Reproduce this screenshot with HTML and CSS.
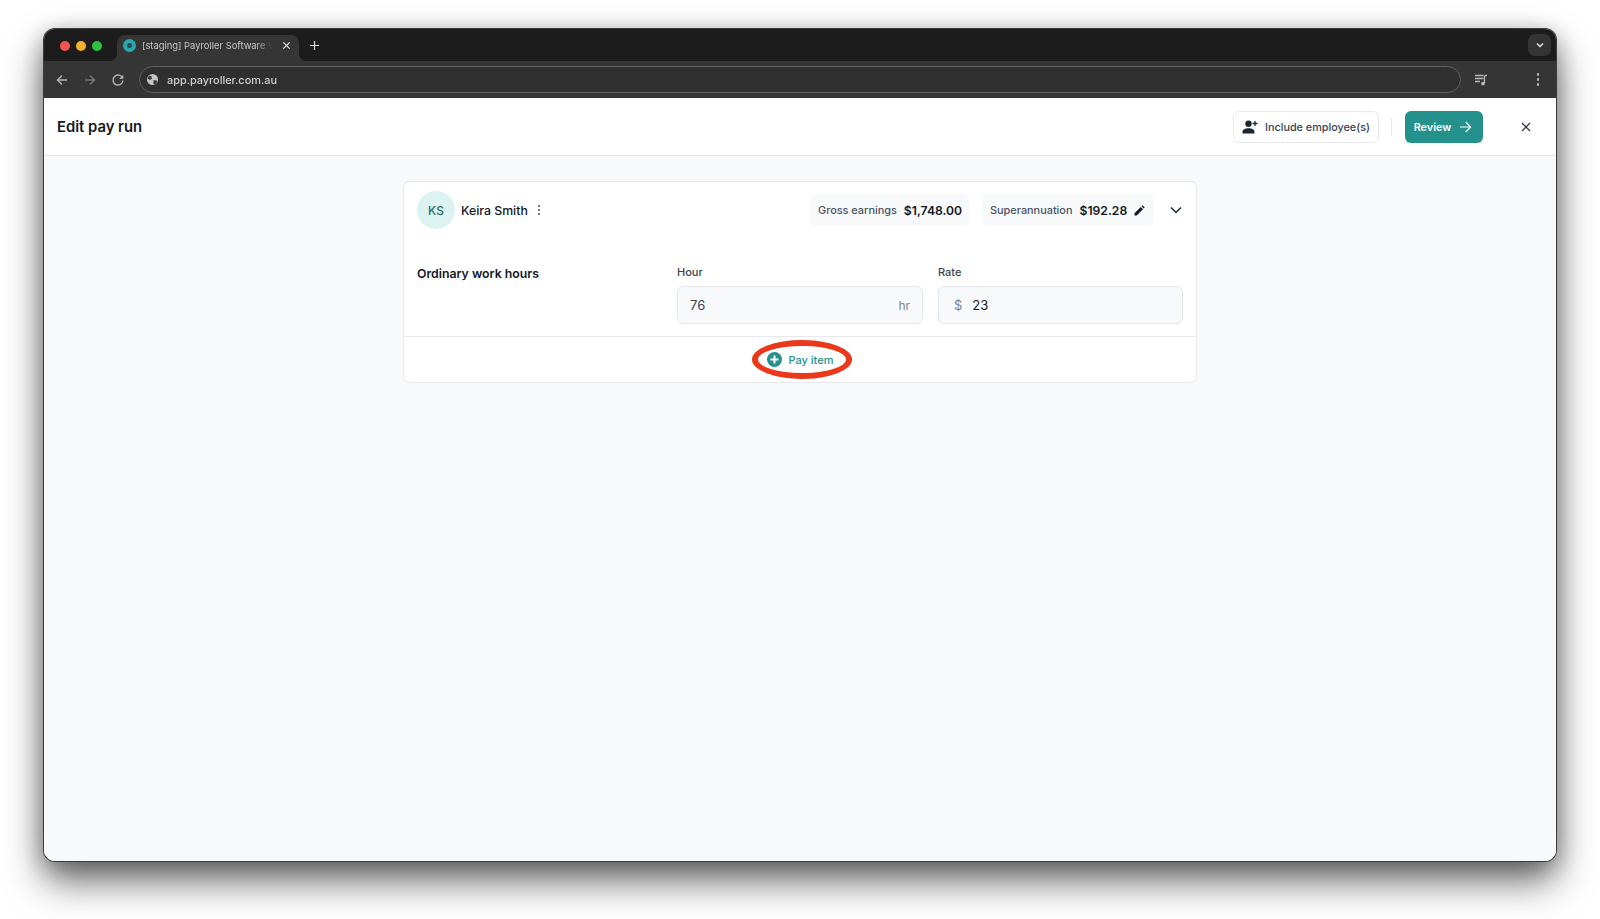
FILE: index.html
```html
<!DOCTYPE html>
<html lang="en">
<head>
  <meta charset="UTF-8">
  <title>Edit pay run</title>
  <link rel="stylesheet" href="styles.css">
</head>
<body>
  <div class="window">
    <!-- Browser chrome -->
    <div class="tabstrip">
      <div class="lights">
        <span class="light red"></span>
        <span class="light yellow"></span>
        <span class="light green"></span>
      </div>
      <div class="tab">
        <span class="favicon"></span>
        <span class="tab-title">[staging] Payroller Software V</span>
        <svg class="tab-close" width="9" height="9" viewBox="0 0 10 10"><path d="M1.5 1.5l7 7M8.5 1.5l-7 7" stroke="#e4e4e4" stroke-width="1.3" fill="none"/></svg>
      </div>
      <svg class="new-tab" width="11" height="11" viewBox="0 0 12 12"><path d="M6 1v10M1 6h10" stroke="#d8d8d8" stroke-width="1.3" fill="none"/></svg>
      <div class="tab-search">
        <svg width="10" height="10" viewBox="0 0 10 10"><path d="M2 3.5l3 3 3-3" stroke="#e8e8e8" stroke-width="1.4" fill="none"/></svg>
      </div>
    </div>
    <div class="toolbar">
      <svg class="nav-icon" width="14" height="14" viewBox="0 0 14 14"><path d="M12 7H2.5M7 2.5L2.5 7 7 11.5" stroke="#b4b4b4" stroke-width="1.4" fill="none"/></svg>
      <svg class="nav-icon" width="14" height="14" viewBox="0 0 14 14"><path d="M2 7h9.5M7 2.5L11.5 7 7 11.5" stroke="#777" stroke-width="1.4" fill="none"/></svg>
      <svg class="nav-icon" width="14" height="14" viewBox="0 0 14 14"><path d="M11.6 5A5 5 0 1 0 12 7.5" stroke="#b4b4b4" stroke-width="1.4" fill="none"/><path d="M12.3 1.8v4h-4z" fill="#b4b4b4"/></svg>
      <div class="address">
        <svg width="13" height="13" viewBox="0 0 13 13"><circle cx="6.5" cy="6.5" r="5.5" fill="#c4c4c4"/><path d="M3 2.5l2.5 1 .5 2-2 1.5-2.5-1.5zM7.5 7l3 .5.8 1.5-2.3 2.7-1.5-.7z" fill="#3a3a3a"/></svg>
        <span>app.payroller.com.au</span>
      </div>
      <svg class="media-icon" width="14" height="12" viewBox="0 0 14 12"><path d="M1 1.5h8.5M1 4.5h8.5M1 7.5h5" stroke="#b8b8b8" stroke-width="1.4" fill="none"/><path d="M10.5 2v7" stroke="#b8b8b8" stroke-width="1.3"/><path d="M10.5 1.5h2.5" stroke="#b8b8b8" stroke-width="1.4"/><circle cx="9" cy="9.6" r="1.9" fill="#b8b8b8"/></svg>
      <div class="menu-dots"><i></i><i></i><i></i></div>
    </div>

    <!-- App -->
    <header class="page-head">
      <h1>Edit pay run</h1>
      <button class="btn-outline">
        <svg width="16" height="14" viewBox="0 0 16 14"><circle cx="6.5" cy="3.8" r="3.2" fill="#1d2433"/><path d="M0.5 13.5v-1.7c0-2.4 2.7-3.6 6-3.6s6 1.2 6 3.6v1.7z" fill="#1d2433"/><path d="M13 1v5M10.5 3.5h5" stroke="#1d2433" stroke-width="1.3"/></svg>
        <span>Include employee(s)</span>
      </button>
      <span class="head-divider"></span>
      <button class="btn-primary">
        <span>Review</span>
        <svg width="13" height="12" viewBox="0 0 13 12"><path d="M1 6h10.5M6.8 1l4.9 5-4.9 5" stroke="#fff" stroke-width="1.1" fill="none"/></svg>
      </button>
      <svg class="head-close" width="10" height="10" viewBox="0 0 10 10"><path d="M1 1l8 8M9 1L1 9" stroke="#2b3240" stroke-width="1.2" fill="none"/></svg>
    </header>

    <main class="content">
      <section class="card">
        <div class="card-top">
          <div class="avatar">KS</div>
          <span class="name">Keira Smith</span>
          <div class="kebab"><i></i><i></i><i></i></div>
          <div class="chip chip-gross">
            <span class="chip-label">Gross earnings</span>
            <strong>$1,748.00</strong>
          </div>
          <div class="chip chip-super">
            <span class="chip-label">Superannuation</span>
            <strong>$192.28</strong>
            <svg width="11" height="11" viewBox="0 0 11 11"><path d="M0.5 10.5V8.3L6.8 2l2.2 2.2-6.3 6.3zM7.6 1.2L8.6.3l2.1 2.1-1 1z" fill="#111827"/></svg>
          </div>
          <svg class="chevron" width="12" height="8" viewBox="0 0 12 8"><path d="M1 1.5l5 5 5-5" stroke="#1d2433" stroke-width="1.5" fill="none"/></svg>
        </div>
        <div class="work-row">
          <div class="work-title">Ordinary work hours</div>
          <div class="field">
            <label>Hour</label>
            <div class="input">
              <span class="value-muted">76</span>
              <span class="suffix">hr</span>
            </div>
          </div>
          <div class="field">
            <label>Rate</label>
            <div class="input">
              <span class="prefix">$</span>
              <span class="value">23</span>
            </div>
          </div>
        </div>
        <div class="card-foot">
          <button class="pay-item">
            <svg width="15" height="15" viewBox="0 0 15 15"><circle cx="7.5" cy="7.5" r="7.5" fill="#25918c"/><path d="M7.5 3.5v8M3.5 7.5h8" stroke="#fff" stroke-width="2"/></svg>
            Pay item
            <span class="oval"></span>
          </button>
        </div>
      </section>
    </main>
  </div>
</body>
</html>
```

FILE: styles.css
```css
body {
  margin: 0;
  padding: 29px 44px 0;
  height: 919px;
  box-sizing: border-box;
  overflow: hidden;
  background: #fff;
  font-family: Inter, "Noto Sans", sans-serif;
  color: #111827;
}
button {
  font-family: inherit;
  cursor: pointer;
}

/* The reference is a soft, upscaled capture, hence the slight blur */
.window {
  height: 832px;
  display: flex;
  flex-direction: column;
  border-radius: 11px;
  overflow: hidden;
  box-shadow: 0 0 0 1px #3c3c3c, 0 20px 38px rgba(0,0,0,0.58), 0 4px 24px rgba(0,0,0,0.28);
  filter: blur(0.3px);
}

/* Browser chrome */
.tabstrip {
  height: 32px;
  flex: none;
  display: flex;
  align-items: flex-end;
  background: #1c1c1c;
  padding-right: 5px;
}
.lights {
  display: flex;
  gap: 6px;
  padding: 0 0 10px 16px;
  width: 73px;
  box-sizing: border-box;
}
.light {
  width: 10px;
  height: 10px;
  border-radius: 50%;
}
.red { background: #f4564d; }
.yellow { background: #f5b02e; }
.green { background: #2cc23f; }
.tab {
  position: relative;
  width: 182px;
  height: 26px;
  box-sizing: border-box;
  display: flex;
  align-items: center;
  padding: 0 8px 5px 6px;
  background: #353535;
  border-radius: 8px 8px 0 0;
}
.tab::before,
.tab::after {
  content: "";
  position: absolute;
  bottom: 0;
  width: 8px;
  height: 8px;
}
.tab::before {
  left: -8px;
  background: radial-gradient(circle at 0 0, #1c1c1c 8px, #353535 8.5px);
}
.tab::after {
  right: -8px;
  background: radial-gradient(circle at 100% 0, #1c1c1c 8px, #353535 8.5px);
}
.favicon {
  flex: none;
  width: 5px;
  height: 5px;
  border: 4px solid #2aa8ad;
  border-radius: 50%;
  background: #2f4c50;
}
.tab-title {
  flex: 1;
  margin-left: 6px;
  font-size: 9.4px;
  color: #c9c9c9;
  white-space: nowrap;
  -webkit-mask-image: linear-gradient(to right, #000 86%, transparent 98%);
  mask-image: linear-gradient(to right, #000 86%, transparent 98%);
}
.tab-close {
  flex: none;
  margin-left: 7px;
}
.new-tab {
  margin: 0 0 10px 10px;
}
.tab-search {
  margin: 0 0 5px auto;
  width: 23px;
  height: 22px;
  display: flex;
  align-items: center;
  justify-content: center;
  background: #343434;
  border-radius: 7px;
}
.toolbar {
  height: 37px;
  flex: none;
  box-sizing: border-box;
  display: flex;
  align-items: center;
  padding: 0 15px 0 4px;
  background: #353535;
}
.nav-icon {
  margin: 0 7px;
}
.address {
  margin-left: 7px;
  width: 1322px;
  height: 27px;
  box-sizing: border-box;
  display: flex;
  align-items: center;
  gap: 8px;
  padding-left: 6px;
  border: 1px solid #626262;
  border-radius: 14px;
  background: #2f2f2f;
  font-size: 10.9px;
  font-weight: 500;
  color: #d0d0d0;
}
.media-icon {
  margin-left: 13px;
}
.menu-dots {
  margin-left: auto;
  display: flex;
  flex-direction: column;
  gap: 2.5px;
  padding-right: 2px;
}
.menu-dots i {
  width: 2.5px;
  height: 2.5px;
  border-radius: 50%;
  background: #c0c0c0;
}

/* Page header */
.page-head {
  height: 58px;
  flex: none;
  box-sizing: border-box;
  display: flex;
  align-items: center;
  padding: 0 25px 0 13px;
  background: #fff;
  border-bottom: 1px solid #e3e6ea;
}
.page-head h1 {
  margin: 0 auto 0 0;
  font-size: 14.8px;
  font-weight: 600;
  color: #14181f;
}
.btn-outline {
  height: 32px;
  width: 146px;
  display: flex;
  align-items: center;
  justify-content: center;
  gap: 7px;
  padding: 0;
  background: #fff;
  border: 1px solid #e8eaee;
  border-radius: 6px;
  font-size: 10.8px;
  font-weight: 500;
  color: #3a4150;
}
.btn-outline span,
.btn-primary span {
  padding-top: 1px;
}
.head-divider {
  width: 1px;
  height: 18px;
  margin: 0 13px 0 12px;
  background: #e3e6ea;
}
.btn-primary {
  height: 32px;
  width: 78px;
  display: flex;
  align-items: center;
  justify-content: center;
  gap: 8px;
  padding: 0 2px 0 0;
  background: #25918c;
  border: none;
  border-radius: 6px;
  font-size: 10.8px;
  font-weight: 600;
  color: #fff;
}
.head-close {
  margin-left: 38px;
}

/* Pay run card */
.content {
  flex: 1;
  padding-top: 25px;
  background: #f8f9fb;
}
.card {
  width: 794px;
  margin: 0 auto;
  box-sizing: border-box;
  background: #fff;
  border: 1px solid #e6e8ec;
  border-radius: 6px;
}
.card-top {
  display: flex;
  align-items: center;
  padding: 9px 14px 0 13px;
}
.avatar {
  width: 38px;
  height: 38px;
  flex: none;
  display: flex;
  align-items: center;
  justify-content: center;
  border-radius: 50%;
  background: #dcf3f1;
  font-size: 12px;
  font-weight: 500;
  color: #2a6f6c;
}
.name {
  margin-left: 6px;
  font-size: 12.3px;
  font-weight: 500;
  color: #14181f;
}
.kebab {
  margin-left: 10px;
  display: flex;
  flex-direction: column;
  gap: 1.5px;
}
.kebab i {
  width: 2.2px;
  height: 2.2px;
  border-radius: 50%;
  background: #4a5160;
}
.chip {
  height: 32px;
  box-sizing: border-box;
  display: flex;
  align-items: center;
  gap: 7px;
  border-radius: 6px;
  background: #f8f9fb;
}
.chip-gross {
  margin-left: auto;
  width: 159px;
  padding-left: 8px;
}
.chip-super {
  margin-left: 13px;
  width: 172px;
  padding-left: 8px;
}
.chip-label {
  font-size: 10.9px;
  font-weight: 500;
  color: #4b5361;
}
.chip strong {
  font-size: 12.2px;
  font-weight: 600;
  color: #14181f;
}
.chevron {
  margin-left: 16px;
}
.work-row {
  display: grid;
  grid-template-columns: 245px 246px 245px;
  column-gap: 15px;
  margin-top: 36px;
  padding: 0 12px 12px 13px;
}
.work-title {
  padding-top: 1px;
  font-size: 12.3px;
  font-weight: 600;
  color: #14181f;
}
.field label {
  display: block;
  font-size: 11px;
  font-weight: 500;
  line-height: 14px;
  color: #3a4150;
}
.input {
  height: 38px;
  margin-top: 7px;
  box-sizing: border-box;
  display: flex;
  align-items: center;
  padding: 0 12px;
  background: #f8f9fb;
  border: 1.5px solid #e3e6ea;
  border-radius: 6px;
  font-size: 13px;
}
.value-muted { color: #3a4150; }
.value { color: #14181f; }
.suffix {
  margin-left: auto;
  font-size: 12px;
  color: #7b8290;
}
.prefix {
  margin: 0 10px 0 3px;
  color: #7b8290;
}
.card-foot {
  display: flex;
  justify-content: center;
  height: 45px;
  align-items: center;
  border-top: 1px solid #e6e8ec;
}
.pay-item {
  position: relative;
  display: flex;
  align-items: center;
  gap: 7px;
  padding: 0;
  background: none;
  border: none;
  font-size: 11px;
  font-weight: 500;
  color: #25918c;
}
/* Red annotation ring drawn over the button */
.oval {
  position: absolute;
  left: -15px;
  right: -19px;
  top: -12px;
  bottom: -12px;
  border: 6px solid #e9391a;
  border-radius: 50%;
}
```
